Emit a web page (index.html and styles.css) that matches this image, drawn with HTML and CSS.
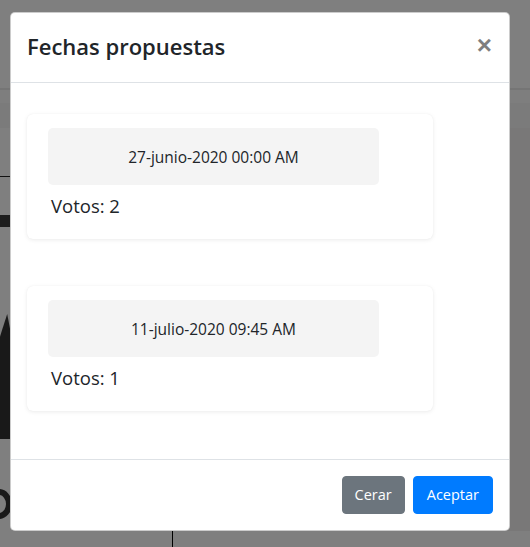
FILE: index.html
```html
<!DOCTYPE html>
<html lang="es">
<head>
<meta charset="utf-8">
<title>Fechas propuestas</title>
<link rel="stylesheet" href="styles.css">
</head>
<body>
<div class="page">
  <div class="page-top"></div>
  <div class="page-band"></div>
  <div class="page-sub"></div>
  <div class="page-main">
    <div class="side">
      <div class="side-line"></div>
      <div class="side-bar"></div>
      <div class="side-shape"></div>
      <div class="side-ring"></div>
    </div>
  </div>
  <div class="page-foot">
    <div class="foot-light"></div>
    <div class="foot-rule"></div>
  </div>
</div>

<div class="backdrop"></div>

<div class="modal">
  <div class="modal-header">
    <h4 class="modal-title">Fechas propuestas</h4>
    <button class="close" type="button" aria-label="Close">×</button>
  </div>
  <div class="modal-body">
    <div class="card">
      <div class="date-box">27-junio-2020 00:00 AM</div>
      <div class="votes">Votos: 2</div>
    </div>
    <div class="card">
      <div class="date-box">11-julio-2020 09:45 AM</div>
      <div class="votes">Votos: 1</div>
    </div>
  </div>
  <div class="modal-footer">
    <button class="btn btn-secondary" type="button">Cerar</button>
    <button class="btn btn-primary" type="button">Aceptar</button>
  </div>
</div>
</body>
</html>
```

FILE: styles.css
```css
* { box-sizing: border-box; }

html, body {
  margin: 0;
  padding: 0;
  width: 530px;
  height: 547px;
  overflow: hidden;
}

body {
  font-family: "Open Sans", "Noto Sans", sans-serif;
  color: #212529;
  background: #fff;
  position: relative;
}

/* page behind the backdrop */
.page {
  display: flex;
  flex-direction: column;
  height: 547px;
  background: #f2f0f1;
}
.page-top { height: 88px; background: #fff; }
.page-band { height: 15px; background: #fcfcfc; border-top: 2px solid #eaeaea; }
.page-sub { height: 25px; background: #f6f6f6; }
.page-main { flex: 1; display: flex; }
.side { width: 12px; display: flex; flex-direction: column; background: #fff; overflow: hidden; }
.side-line { margin-top: 48px; height: 1px; background: #222; }
.side-bar { margin-top: 38px; height: 12px; background: #3a3a3a; }
.side-shape {
  margin-top: 87px;
  height: 125px;
  background: #333;
  clip-path: polygon(0 18%, 60% 0, 100% 20%, 100% 100%, 0 100%);
}
.side-ring {
  margin-top: 50px;
  margin-left: -14px;
  width: 26px;
  height: 30px;
  border: 6px solid #333;
  border-radius: 50%;
  flex: none;
}
.page-foot { height: 16px; display: flex; background: #fff; }
.foot-light { width: 150px; }
.foot-rule { margin-left: 22px; width: 1px; background: #000; }

.backdrop {
  position: absolute;
  inset: 0;
  background: rgba(0, 0, 0, 0.5);
}

/* modal */
.modal {
  position: absolute;
  left: 10px;
  top: 12px;
  width: 500px;
  background: #fff;
  border: 1px solid rgba(0, 0, 0, 0.2);
  border-radius: 5px;
  display: flex;
  flex-direction: column;
}

.modal-header {
  height: 70px;
  display: flex;
  align-items: center;
  justify-content: space-between;
  padding: 0 16px;
  border-bottom: 1px solid #dee2e6;
}
.modal-title {
  margin: 0;
  font-size: 22px;
  font-weight: 600;
  line-height: 1.2;
  color: #212529;
  padding-bottom: 2px;
}
.close {
  border: 0;
  background: transparent;
  padding: 0;
  font-family: "Liberation Sans", sans-serif;
  font-size: 26px;
  font-weight: 700;
  line-height: 1;
  color: #000;
  opacity: 0.5;
  margin-right: 1px;
  margin-top: -6px;
}

.modal-body {
  padding: 31px 16px 48px;
  display: flex;
  flex-direction: column;
  gap: 47px;
}

.card {
  width: 406px;
  background: #fff;
  border-radius: 6px;
  box-shadow: 0 1px 4px rgba(0, 0, 0, 0.08), 0 0 1px rgba(0, 0, 0, 0.06);
  padding: 14px 20px 18px 21px;
}

.date-box {
  height: 57px;
  width: 331px;
  background: #f4f4f4;
  border-radius: 5px;
  display: flex;
  align-items: center;
  justify-content: center;
  font-size: 15.5px;
  color: #212529;
}

.votes {
  font-size: 18.5px;
  line-height: 30px;
  margin-top: 6px;
  padding-left: 3px;
  color: #212529;
}

.modal-footer {
  border-top: 1px solid #dee2e6;
  display: flex;
  justify-content: flex-end;
  gap: 8px;
  padding: 16px 16px 16px;
}

.btn {
  font-family: inherit;
  font-size: 14.5px;
  line-height: 24px;
  padding: 6px 13px;
  border: 1px solid transparent;
  border-radius: 4px;
  color: #fff;
  height: 38px;
}
.btn-secondary { background: #6c757d; border-color: #6c757d; padding: 6px 12px; }
.btn-primary { background: #007bff; border-color: #007bff; }
```
